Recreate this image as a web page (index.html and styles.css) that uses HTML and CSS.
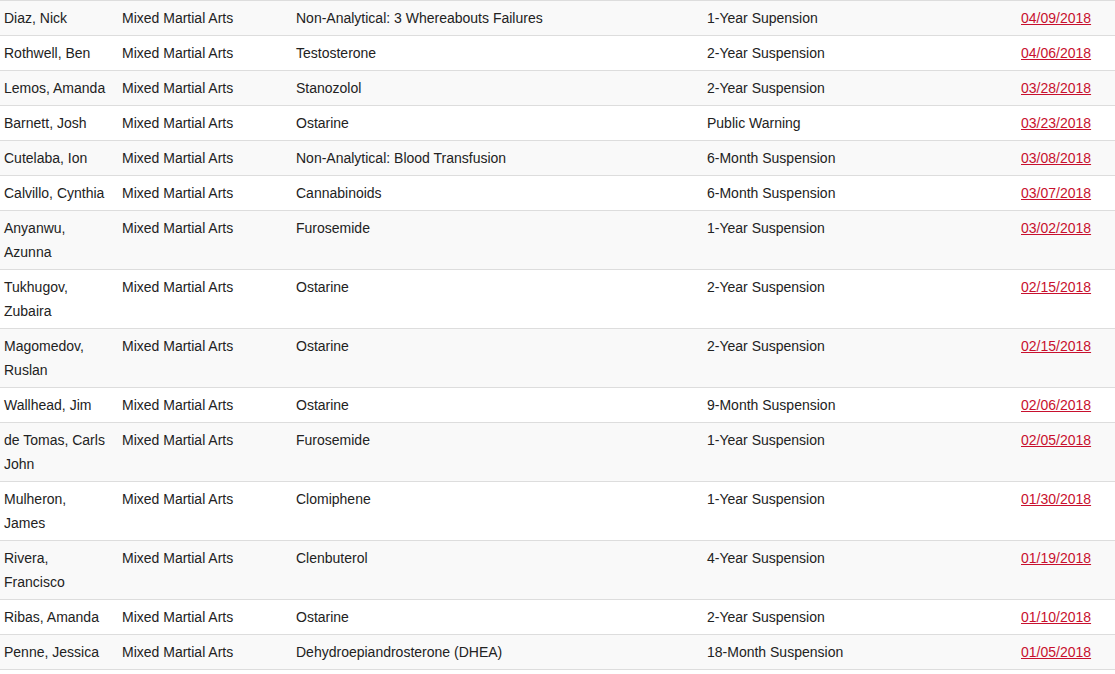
FILE: index.html
```html
<!DOCTYPE html>
<html>
<head>
<meta charset="utf-8">
<link rel="stylesheet" href="styles.css">
</head>
<body>
<table class="sanctions">
<colgroup>
<col class="c-name"><col class="c-sport"><col class="c-sub"><col class="c-pen"><col class="c-date">
</colgroup>
<tbody>
<tr><td>Diaz, Nick</td><td>Mixed Martial Arts</td><td>Non-Analytical: 3 Whereabouts Failures</td><td>1-Year Supension</td><td><a href="#">04/09/2018</a></td></tr>
<tr><td>Rothwell, Ben</td><td>Mixed Martial Arts</td><td>Testosterone</td><td>2-Year Suspension</td><td><a href="#">04/06/2018</a></td></tr>
<tr><td>Lemos, Amanda</td><td>Mixed Martial Arts</td><td>Stanozolol</td><td>2-Year Suspension</td><td><a href="#">03/28/2018</a></td></tr>
<tr><td>Barnett, Josh</td><td>Mixed Martial Arts</td><td>Ostarine</td><td>Public Warning</td><td><a href="#">03/23/2018</a></td></tr>
<tr><td>Cutelaba, Ion</td><td>Mixed Martial Arts</td><td>Non-Analytical: Blood Transfusion</td><td>6-Month Suspension</td><td><a href="#">03/08/2018</a></td></tr>
<tr><td>Calvillo, Cynthia</td><td>Mixed Martial Arts</td><td>Cannabinoids</td><td>6-Month Suspension</td><td><a href="#">03/07/2018</a></td></tr>
<tr><td>Anyanwu, Azunna</td><td>Mixed Martial Arts</td><td>Furosemide</td><td>1-Year Suspension</td><td><a href="#">03/02/2018</a></td></tr>
<tr><td>Tukhugov, Zubaira</td><td>Mixed Martial Arts</td><td>Ostarine</td><td>2-Year Suspension</td><td><a href="#">02/15/2018</a></td></tr>
<tr><td>Magomedov, Ruslan</td><td>Mixed Martial Arts</td><td>Ostarine</td><td>2-Year Suspension</td><td><a href="#">02/15/2018</a></td></tr>
<tr><td>Wallhead, Jim</td><td>Mixed Martial Arts</td><td>Ostarine</td><td>9-Month Suspension</td><td><a href="#">02/06/2018</a></td></tr>
<tr><td>de Tomas, Carls John</td><td>Mixed Martial Arts</td><td>Furosemide</td><td>1-Year Suspension</td><td><a href="#">02/05/2018</a></td></tr>
<tr><td>Mulheron, James</td><td>Mixed Martial Arts</td><td>Clomiphene</td><td>1-Year Suspension</td><td><a href="#">01/30/2018</a></td></tr>
<tr><td>Rivera, Francisco</td><td>Mixed Martial Arts</td><td>Clenbuterol</td><td>4-Year Suspension</td><td><a href="#">01/19/2018</a></td></tr>
<tr><td>Ribas, Amanda</td><td>Mixed Martial Arts</td><td>Ostarine</td><td>2-Year Suspension</td><td><a href="#">01/10/2018</a></td></tr>
<tr><td>Penne, Jessica</td><td>Mixed Martial Arts</td><td>Dehydroepiandrosterone (DHEA)</td><td>18-Month Suspension</td><td><a href="#">01/05/2018</a></td></tr>
</tbody>
</table>
</body>
</html>
```
FILE: styles.css
```css
html, body {
  margin: 0;
  padding: 0;
  background: #fff;
}
body {
  font-family: "Liberation Sans", Arial, sans-serif;
  font-size: 14px;
  color: #222;
}
.sanctions {
  width: 1115px;
  border-collapse: collapse;
  table-layout: fixed;
}
.c-name { width: 118px; }
.c-sport { width: 174px; }
.c-sub { width: 411px; }
.c-pen { width: 314px; }
.c-date { width: 98px; }
.sanctions td {
  padding: 5px 4px;
  line-height: 24px;
  vertical-align: top;
  border-top: 1px solid #ddd;
  text-align: left;
}
.sanctions td:first-child {
  padding-right: 11px;
}
.sanctions tr:last-child td {
  border-bottom: 1px solid #ddd;
}
.sanctions tr:nth-child(odd) td {
  background: #f9f9f9;
}
.sanctions a {
  color: #c8102e;
  text-decoration: underline;
}
```
